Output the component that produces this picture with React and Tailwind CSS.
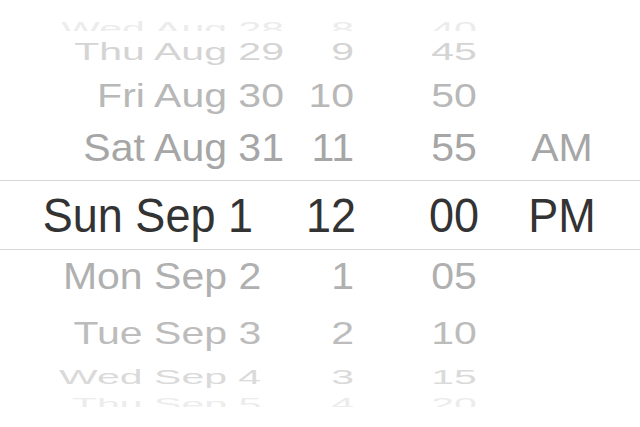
import React from "react";

// one wheel row per entry; scale squashes the off-centre rows like the drum
const rows = [
  { day: "Wed Aug 2", pad: "8", hour: "8", min: "40", ap: "", h: "h-[11px]", inner: "h-[18px]", scale: "scale-y-[0.48]", color: "text-[#ececec]" },
  { day: "Thu Aug 2", pad: "9", hour: "9", min: "45", ap: "", h: "h-[42px]", inner: "h-[42px]", scale: "scale-y-[0.58]", color: "text-[#d4d4d4]" },
  { day: "Fri Aug 3", pad: "0", hour: "10", min: "50", ap: "", h: "h-[44px]", inner: "h-[44px]", scale: "scale-y-[0.82]", color: "text-[#b8b8b8]" },
  { day: "Sat Aug 3", pad: "1", hour: "11", min: "55", ap: "AM", h: "h-[63px]", inner: "h-[63px]", scale: "scale-y-[0.95]", color: "text-[#a6a6a6]" },
];

const below = [
  { day: "Mon Sep 2", hour: "1", min: "05", h: "h-[53px]", inner: "h-[53px]", scale: "scale-y-[0.92]", color: "text-[#b0b0b0]" },
  { day: "Tue Sep 3", hour: "2", min: "10", h: "h-[61px]", inner: "h-[61px]", scale: "scale-y-[0.78]", color: "text-[#bcbcbc]" },
  { day: "Wed Sep 4", hour: "3", min: "15", h: "h-[27px]", inner: "h-[27px]", scale: "scale-y-[0.51]", color: "text-[#dadada]" },
  { day: "Thu Sep 5", hour: "4", min: "20", h: "h-[16px]", inner: "h-[26px]", scale: "scale-y-[0.4]", color: "text-[#ececec]" },
];

function Row({ r, children }) {
  return (
    <div className={`${r.h} overflow-hidden`}>
      <div className={`${r.inner} flex items-center`}>
        <div className={`flex w-full text-[41px] leading-none whitespace-nowrap ${r.scale} ${r.color}`}>
          {children}
        </div>
      </div>
    </div>
  );
}

export default function App() {
  return (
    <div
      className="w-[640px] h-[427px] bg-white overflow-hidden"
      style={{ fontFamily: '"Liberation Sans", Arial, sans-serif' }}
    >
      <div className="h-[20px]" />

      {rows.map((r) => (
        <Row key={r.day + r.pad} r={r}>
          <div className="w-[284px] text-right">
            {r.day}
            {r.pad}
          </div>
          <div className="w-[70px] text-right">{r.hour}</div>
          <div className="w-[50px]" />
          <div className="w-[100px] text-center">{r.min}</div>
          <div className="w-[116px] text-center">{r.ap}</div>
        </Row>
      ))}

      <div className="h-[70px] border-y border-[#d6d6d6] flex items-center">
        <div className="flex w-full text-[45px] leading-none whitespace-nowrap text-[#333333] scale-y-[1.08]">
          <div className="w-[278px] text-right">
            Sun Sep 1<span className="invisible">0</span>
          </div>
          <div className="w-[78px] text-right">12</div>
          <div className="w-[48px]" />
          <div className="w-[100px] text-center">00</div>
          <div className="w-[116px] text-center">PM</div>
        </div>
      </div>

      {below.map((r) => (
        <Row key={r.day} r={r}>
          <div className="w-[284px] text-right">
            {r.day}
            <span className="invisible">0</span>
          </div>
          <div className="w-[70px] text-right">{r.hour}</div>
          <div className="w-[50px]" />
          <div className="w-[100px] text-center">{r.min}</div>
          <div className="w-[116px] text-center" />
        </Row>
      ))}
    </div>
  );
}
